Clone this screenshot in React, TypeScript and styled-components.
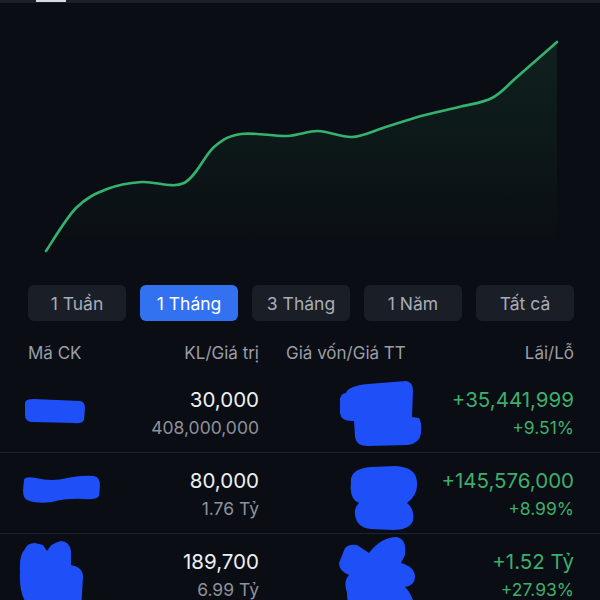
import styled, { createGlobalStyle } from "styled-components";

const GlobalStyle = createGlobalStyle`
  html, body {
    margin: 0;
    padding: 0;
    background: #0a0d13;
  }
  body {
    font-family: Inter, "Noto Sans", "Liberation Sans", sans-serif;
    -webkit-font-smoothing: antialiased;
  }
`;

const Screen = styled.div`
  width: 600px;
  height: 600px;
  overflow: hidden;
  background: #0a0d13;
  display: flex;
  flex-direction: column;
`;

const TopStrip = styled.div`
  height: 3px;
  flex-shrink: 0;
  background: #1a1f2a;
  display: flex;
  padding-left: 36px;
`;

const TopThumb = styled.div`
  width: 30px;
  height: 2px;
  background: #d8dadf;
`;

const ChartBox = styled.div`
  height: 267px;
  flex-shrink: 0;
  svg {
    display: block;
  }
`;

const Periods = styled.div`
  display: flex;
  gap: 14px;
  padding: 15px 25px 0 28px;
  flex-shrink: 0;
`;

const PeriodButton = styled.button<{ $active?: boolean }>`
  width: 98px;
  height: 36px;
  border: none;
  border-radius: 6px;
  font-family: inherit;
  font-size: 17.5px;
  background: ${(p) => (p.$active ? "#3272f0" : "#1a1e27")};
  color: ${(p) => (p.$active ? "#ffffff" : "#a9adb5")};
  padding: 0;
`;

const HeaderRow = styled.div`
  display: grid;
  grid-template-columns: 120px 111px 1fr 1fr;
  padding: 20px 26px 0 28px;
  color: #9a9ea6;
  font-size: 17px;
  line-height: 24px;
  height: 24px;
  flex-shrink: 0;
`;

const HeadCell = styled.div<{ $right?: boolean; $indent?: number }>`
  text-align: ${(p) => (p.$right ? "right" : "left")};
  padding-left: ${(p) => p.$indent ?? 0}px;
  white-space: nowrap;
`;

const Rows = styled.div`
  padding-top: 7px;
  flex-shrink: 0;
`;

const Row = styled.div<{ $last?: boolean }>`
  box-sizing: border-box;
  height: 81px;
  display: grid;
  grid-template-columns: 120px 111px 1fr 1fr;
  align-items: center;
  padding: 0 26px 0 28px;
  border-bottom: ${(p) => (p.$last ? "none" : "1px solid #1e232d")};
  position: relative;
`;

const Stack = styled.div`
  display: flex;
  flex-direction: column;
  align-items: flex-end;
  gap: 5px;
  padding-top: 2px;
`;

const Main = styled.div<{ $green?: boolean }>`
  font-size: 20.5px;
  line-height: 24px;
  color: ${(p) => (p.$green ? "#3fae6b" : "#eef0f3")};
  white-space: nowrap;
`;

const Sub = styled.div<{ $green?: boolean }>`
  font-size: 17.5px;
  line-height: 22px;
  color: ${(p) => (p.$green ? "#3fae6b" : "#8e929a")};
  white-space: nowrap;
`;

const Blob = styled.svg`
  position: absolute;
`;

const pts: [number, number][] = [
  [46, 251], [76, 208], [107, 189], [142, 182], [184, 183], [214, 147],
  [241, 134], [287, 136], [318, 131], [352, 137], [383, 128], [421, 116],
  [459, 107], [492, 98], [517, 77], [557, 42],
];

function smoothPath(p: [number, number][]) {
  let d = `M${p[0][0]},${p[0][1]}`;
  for (let i = 0; i < p.length - 1; i++) {
    const p0 = p[i - 1] || p[i];
    const p1 = p[i];
    const p2 = p[i + 1];
    const p3 = p[i + 2] || p2;
    const c1x = p1[0] + (p2[0] - p0[0]) / 6;
    const c1y = p1[1] + (p2[1] - p0[1]) / 6;
    const c2x = p2[0] - (p3[0] - p1[0]) / 6;
    const c2y = p2[1] - (p3[1] - p1[1]) / 6;
    d += ` C${c1x},${c1y} ${c2x},${c2y} ${p2[0]},${p2[1]}`;
  }
  return d;
}

function Chart() {
  const line = smoothPath(pts);
  const area = `${line} L557,255 L46,255 Z`;
  return (
    <svg width="600" height="267" viewBox="0 3 600 267">
      <defs>
        <linearGradient id="fill" x1="0" y1="0" x2="0" y2="1">
          <stop offset="0" stopColor="#2fa868" stopOpacity="0.13" />
          <stop offset="1" stopColor="#2fa868" stopOpacity="0" />
        </linearGradient>
      </defs>
      <path d={area} fill="url(#fill)" />
      <path d={line} fill="none" stroke="#36b26f" strokeWidth="2.6" strokeLinecap="round" />
    </svg>
  );
}

type BlobShape = { x: number; y: number; w: number; h: number; d: string };

const rows: { kl: string; value: string; pl: string; pct: string; left: BlobShape; mid: BlobShape }[] = [
  {
    kl: "30,000",
    value: "408,000,000",
    pl: "+35,441,999",
    pct: "+9.51%",
    left: { x: 22, y: 26, w: 64, h: 26, d: "M3,6 Q2,1 12,1 L58,3 Q63,4 63,10 L62,22 Q60,26 52,25 L10,24 Q3,24 3,17 Z" },
    mid: { x: 338, y: 9, w: 84, h: 66, d: "M8,12 Q10,5 30,3 L68,0 Q75,1 75,10 L74,36 L81,37 Q84,41 83,52 Q82,62 70,64 L30,65 Q18,65 17,56 L16,40 Q3,41 2,32 L2,18 Q3,12 8,12 Z" },
  },
  {
    kl: "80,000",
    value: "1.76 Tỷ",
    pl: "+145,576,000",
    pct: "+8.99%",
    left: { x: 22, y: 21, w: 80, h: 30, d: "M2,6 Q3,2 14,4 Q30,8 45,4 Q60,1 72,2 Q78,3 78,12 L77,22 Q74,26 62,25 Q45,24 30,28 Q14,30 5,26 Q1,24 1,16 Z" },
    mid: { x: 343, y: 12, w: 76, h: 66, d: "M8,18 Q6,4 28,2 L52,1 Q74,2 74,18 Q75,30 64,38 Q72,44 70,56 Q66,65 50,65 L28,64 Q14,63 12,50 Q11,42 16,38 Q6,34 8,18 Z" },
  },
  {
    kl: "189,700",
    value: "6.99 Tỷ",
    pl: "+1.52 Tỷ",
    pct: "+27.93%",
    left: { x: 17, y: 7, w: 68, h: 74, d: "M8,8 Q10,2 18,2 L26,4 L30,10 Q34,2 44,0 Q52,0 54,10 L54,24 Q66,26 66,36 L64,70 L20,72 Q10,72 8,60 Q2,50 3,30 Q2,14 8,8 Z" },
    mid: { x: 335, y: 3, w: 85, h: 78, d: "M8,16 Q10,6 22,8 L34,16 Q46,0 62,0 Q72,2 70,18 L66,26 Q80,30 80,40 Q80,48 70,50 Q80,60 80,78 L20,78 Q12,70 12,56 Q8,44 14,38 Q4,34 4,26 Z" },
  },
];

function Scribble({ s }: { s: BlobShape }) {
  return (
    <Blob width={s.w} height={s.h} viewBox={`0 0 ${s.w} ${s.h}`} style={{ left: s.x, top: s.y }}>
      <path d={s.d} fill="#1f4ff6" />
    </Blob>
  );
}

export default function App() {
  return (
    <Screen>
      <GlobalStyle />
      <TopStrip>
        <TopThumb />
      </TopStrip>
      <ChartBox>
        <Chart />
      </ChartBox>
      <Periods>
        <PeriodButton>1 Tuần</PeriodButton>
        <PeriodButton $active>1 Tháng</PeriodButton>
        <PeriodButton>3 Tháng</PeriodButton>
        <PeriodButton>1 Năm</PeriodButton>
        <PeriodButton>Tất cả</PeriodButton>
      </Periods>
      <HeaderRow>
        <HeadCell>Mã CK</HeadCell>
        <HeadCell $right>KL/Giá trị</HeadCell>
        <HeadCell $indent={27}>Giá vốn/Giá TT</HeadCell>
        <HeadCell $right>Lãi/Lỗ</HeadCell>
      </HeaderRow>
      <Rows>
        {rows.map((r, i) => (
          <Row key={r.kl} $last={i === rows.length - 1}>
            <div />
            <Stack>
              <Main>{r.kl}</Main>
              <Sub>{r.value}</Sub>
            </Stack>
            <div />
            <Stack>
              <Main $green>{r.pl}</Main>
              <Sub $green>{r.pct}</Sub>
            </Stack>
            <Scribble s={r.left} />
            <Scribble s={r.mid} />
          </Row>
        ))}
      </Rows>
    </Screen>
  );
}
